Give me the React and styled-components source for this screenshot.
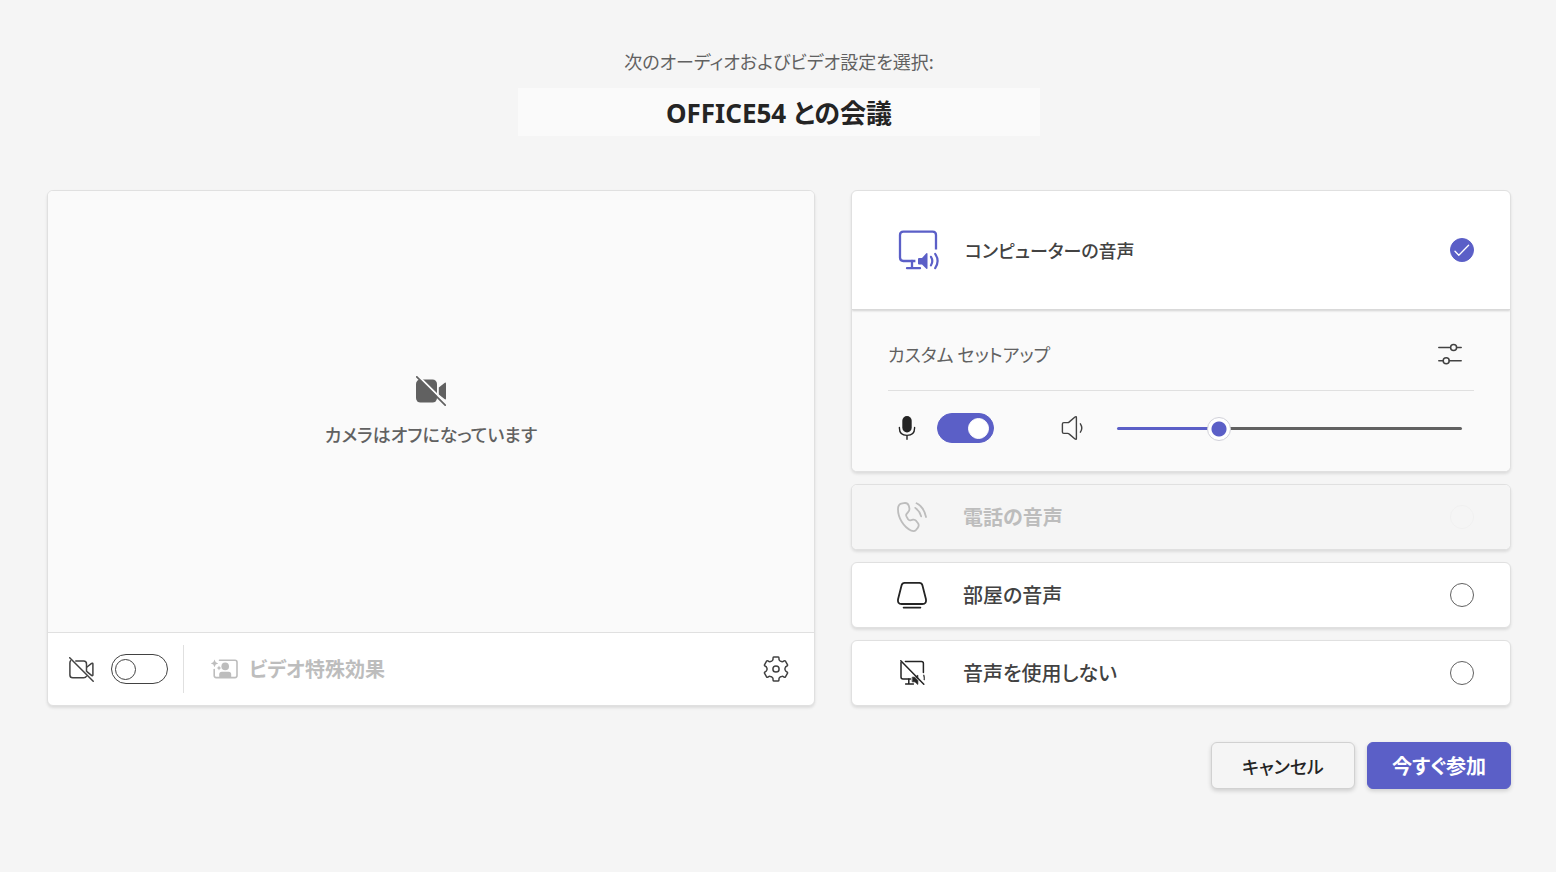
import { useState } from 'react';
import styled, { createGlobalStyle, css } from 'styled-components';

const GlobalStyle = createGlobalStyle`
  :root {
    --color-brand: #5b5fc7;
    --color-page: #f5f5f5;
    --color-panel: #fafafa;
    --color-border: #e0e0e0;
    --color-text: #242424;
    --color-text-2: #424242;
    --color-text-3: #616161;
    --color-disabled: #bdbdbd;
  }

  *,
  *::before,
  *::after {
    box-sizing: border-box;
  }

  body {
    margin: 0;
    background: var(--color-page);
    color: var(--color-text-2);
    font-family: 'Noto Sans CJK JP', sans-serif;
    font-size: 20px;
    line-height: 28px;
    font-feature-settings: 'palt';
  }

  button,
  input {
    margin: 0;
    font: inherit;
    font-feature-settings: inherit;
    color: inherit;
  }
`;

const Page = styled.main`
  min-height: 100vh;
  padding: 47px 45px 47px 47px;
`;

const Header = styled.header`
  display: flex;
  flex-direction: column;
  align-items: center;
  gap: 13px;
  margin-bottom: 54px;
`;

const Prompt = styled.label`
  color: var(--color-text-3);
  font-size: 18px;
`;

const TitleInput = styled.input`
  width: 100%;
  max-width: 522px;
  height: 48px;
  padding: 0 16px;
  border: 0;
  background: var(--color-panel);
  color: var(--color-text);
  font-family: 'Noto Sans', 'Noto Sans CJK JP', sans-serif;
  font-size: 26px;
  font-weight: 700;
  text-align: center;
`;

const Columns = styled.div`
  display: grid;
  grid-template-columns: 64fr 55fr;
  gap: 36px;
`;

const Card = styled.section`
  border: 1px solid var(--color-border);
  border-radius: 6px;
  background: #fff;
  box-shadow: 0 2px 3px rgba(0, 0, 0, 0.1);
  overflow: hidden;
`;

const VideoCard = styled(Card)`
  display: flex;
  flex-direction: column;
`;

const Preview = styled.div`
  flex: 1;
  display: flex;
  flex-direction: column;
  align-items: center;
  justify-content: center;
  gap: 14px;
  background: var(--color-panel);
  color: var(--color-text-3);
  font-size: 18px;
  font-weight: 500;
`;

const VideoBar = styled.div`
  display: flex;
  align-items: center;
  height: 73px;
  padding: 0 25px 0 21px;
  border-top: 1px solid var(--color-border);
`;

const ToggleLabel = styled.label`
  display: flex;
  align-items: center;
  gap: 18px;
`;

const CameraLabel = styled(ToggleLabel)`
  gap: 17px;
`;

const Divider = styled.div`
  width: 1px;
  height: 48px;
  margin: 0 27px 0 15px;
  background: var(--color-border);
`;

const PlainButton = styled.button`
  display: flex;
  align-items: center;
  gap: 11px;
  padding: 0;
  border: 0;
  background: none;
  font-weight: 700;

  &:disabled {
    color: var(--color-disabled);
  }
`;

const SettingsButton = styled(PlainButton)`
  margin-left: auto;
`;

const Switch = styled.input`
  appearance: none;
  display: flex;
  align-items: center;
  width: 57px;
  height: 30px;
  padding: 0 4px 0 3px;
  border: 1px solid var(--color-text-2);
  border-radius: 15px;

  &::before {
    content: '';
    width: 21px;
    height: 21px;
    border: 1px solid var(--color-text-2);
    border-radius: 50%;
  }

  &:checked {
    justify-content: flex-end;
    border-color: var(--color-brand);
    background: var(--color-brand);
  }

  &:checked::before {
    border-color: #fff;
    background: #fff;
  }
`;

const AudioOptions = styled.div`
  display: flex;
  flex-direction: column;
  gap: 12px;
`;

const Option = styled.label`
  display: flex;
  align-items: center;
  gap: 36px;
  height: 64px;
  padding: 0 36px 0 45px;
  font-weight: 500;

  ${(props) =>
    props.$large &&
    css`
      position: relative;
      gap: 25px;
      height: 119px;
      padding-left: 46px;
      border-bottom: 1px solid #d9d9d9;
      box-shadow: 0 1px 2px rgba(0, 0, 0, 0.16);
      font-size: 18px;
    `}

  ${(props) =>
    props.$disabled &&
    css`
      background: var(--color-page);
      color: var(--color-disabled);
      font-weight: 700;
    `}
`;

const RadioBox = styled.span`
  display: grid;
  place-items: center;
  margin-left: auto;

  & > * {
    grid-area: 1 / 1;
  }
`;

const Radio = styled.input`
  appearance: none;
  width: 24px;
  height: 24px;
  border: 1px solid var(--color-text-3);
  border-radius: 50%;

  &:disabled {
    border-color: #f0f0f0;
  }

  &:checked {
    border-color: var(--color-brand);
    background: var(--color-brand);
  }
`;

const Setup = styled.div`
  padding: 0 36px;
  background: var(--color-panel);
`;

const SetupHead = styled.div`
  display: flex;
  align-items: center;
  justify-content: space-between;
  height: 81px;
  padding: 8px 12px 0 0;
  border-bottom: 1px solid var(--color-border);
  color: var(--color-text-3);
  font-size: 18px;
`;

const SetupControls = styled.div`
  display: flex;
  align-items: center;
  gap: 67px;
  height: 80px;
  padding: 0 12px 6px 7px;
`;

const VolumeLabel = styled.label`
  flex: 1;
  display: flex;
  align-items: center;
  gap: 32px;
`;

const Slider = styled.input`
  appearance: none;
  flex: 1;
  min-width: 0;
  height: 24px;
  background: none;

  &::-webkit-slider-runnable-track {
    height: 3px;
    border-radius: 2px;
    background: linear-gradient(
      to right,
      var(--color-brand) ${(props) => props.value}%,
      var(--color-text-3) ${(props) => props.value}%
    );
  }

  &::-webkit-slider-thumb {
    appearance: none;
    width: 24px;
    height: 24px;
    margin-top: -10px;
    border: 1px solid #d1d1d9;
    border-radius: 50%;
    background: radial-gradient(var(--color-brand) 7px, #fff 8px);
  }
`;

const Actions = styled.footer`
  display: flex;
  justify-content: flex-end;
  gap: 12px;
  margin-top: 36px;
`;

const Button = styled.button`
  min-width: 144px;
  height: 47px;
  padding: 0 16px;
  border: 1px solid #d1d1d1;
  border-radius: 6px;
  background: var(--color-page);
  box-shadow: 0 2px 4px rgba(0, 0, 0, 0.16);
  color: var(--color-text);
  font-size: 18px;
  font-weight: 500;

  ${(props) =>
    props.$primary &&
    css`
      border-color: var(--color-brand);
      background: var(--color-brand);
      color: #fff;
      font-size: 20px;
      font-weight: 700;
    `}
`;

const Icon = styled.svg`
  display: block;
  flex: none;
  fill: none;
  stroke: currentColor;
  stroke-linecap: round;
  stroke-linejoin: round;
`;

function CameraOffFilled() {
  return (
    <Icon width='30' height='30' viewBox='0 0 30 30' strokeWidth='1.7'>
      <rect x='0' y='3.5' width='21' height='23' rx='4.5' fill='currentColor' stroke='none' />
      <path d='M22.8 11.6 28.5 6.9Q30 6 30 7.6V22.4Q30 24 28.5 23.1L22.8 18.4Z' fill='currentColor' stroke='none' />
      <path d='M3 .8 30.5 28' stroke='#fafafa' strokeWidth='2' />
      <path d='M.8.8 29.2 29.2' />
    </Icon>
  );
}

function CameraOff() {
  return (
    <Icon width='25' height='25' viewBox='0 0 25 25' strokeWidth='1.5'>
      <path d='M1.6 3.8Q.9 4.6.9 6V18Q.9 20.8 3.8 20.8H14.6Q16.8 20.8 17.4 19.3' />
      <path d='M6.8 4.1H14.6Q17.5 4.1 17.5 7V14.2' />
      <path d='M18 10 22.6 6.4Q23.9 5.7 23.9 7V18Q23.9 19 22.8 18.6L18.2 14.8' />
      <path d='M.7.7 24.2 24.2' />
    </Icon>
  );
}

function VideoEffects() {
  return (
    <Icon width='27' height='24' viewBox='0 0 27 24' strokeWidth='1.6'>
      <path d='M8.5 3.2H24Q26 3.2 26 5.2V18.6Q26 20.6 24 20.6H5.2Q3.2 20.6 3.2 18.6V12.5' />
      <g fill='currentColor' stroke='none'>
        <circle cx='14.2' cy='9.4' r='3.8' />
        <path d='M8.2 20.6V17.4Q8.2 14.8 10.8 14.8H17.6Q20.2 14.8 20.2 17.4V20.6Z' />
        <path d='M3.5 2.6 4.7 5.3 7.3 6.4 4.7 7.6 3.5 10.2 2.3 7.6-.1 6.4 2.3 5.3Z' />
        <path d='M8 8.6 8.8 10.2 10.4 11 8.8 11.8 8 13.4 7.2 11.8 5.6 11 7.2 10.2Z' />
      </g>
    </Icon>
  );
}

// six teeth, the first one pointing up
function gearPath() {
  const point = (angle, radius) => {
    const a = (angle * Math.PI) / 180;
    return `${(13 + Math.sin(a) * radius).toFixed(2)} ${(13 - Math.cos(a) * radius).toFixed(2)}`;
  };

  const teeth = [0, 60, 120, 180, 240, 300].map(
    (a) =>
      `${point(a - 22, 9.4)} Q${point(a - 17, 9.6)} ${point(a - 15, 11.4)} Q${point(a - 14, 12.3)} ${point(a - 10, 12.3)} L${point(a + 10, 12.3)} Q${point(a + 14, 12.3)} ${point(a + 15, 11.4)} Q${point(a + 17, 9.6)} ${point(a + 22, 9.4)} Q${point(a + 30, 8.4)} `
  );

  return `M${teeth.join('')}${point(-22, 9.4)}Z`;
}

function Gear() {
  return (
    <Icon width='26' height='26' viewBox='0 0 26 26' strokeWidth='1.5'>
      <path d={gearPath()} />
      <circle cx='13' cy='13' r='3.1' />
    </Icon>
  );
}

function ComputerAudio() {
  return (
    <Icon width='42' height='42' viewBox='0 -1 42 42' strokeWidth='2.3' color='#5b5fc7'>
      <path d='M17.4 31H5.4Q2 31 2 27.6V5Q2 1.6 5.4 1.6H34.6Q38 1.6 38 5V19.6' strokeLinecap='butt' />
      <path d='M14 31V38M9 38.2H22' />
      <path d='M21 28H24L28.3 23.3Q29.5 22.5 29.5 24.1V37.9Q29.5 39.5 28.3 38.7L24 34.5H21Q20 34.5 20 33.5V29Q20 28 21 28Z' fill='currentColor' stroke='none' />
      <path d='M33 26.8Q35.6 31 33 35.3M37.2 24Q42 31 37.2 38.1' strokeWidth='2.2' />
    </Icon>
  );
}

function PhoneAudio() {
  return (
    <Icon width='30' height='30' viewBox='0 0 92 92' strokeWidth='5.5'>
      <path d='M13 5 25 3Q33 3 36 11L38 19Q39 26 34 31L29 37Q27 40 29 44L34 53Q37 57 41 56L49 54Q55 53 59 58L65 66Q69 73 63 80L58 86Q53 91 44 88C20 77 3 48 3 22Q3 8 13 5Z' />
      <path d='M56 18Q69 27 74 44M60 4Q82 14 89 46' />
    </Icon>
  );
}

function RoomAudio() {
  return (
    <Icon width='30' height='30' viewBox='0 0 30 30' strokeWidth='1.8' color='#242424'>
      <path d='M7.6 2.8H22.4Q24.8 2.8 25.4 5.2L28.9 19Q29.8 24 25.4 24H4.6Q.2 24 1.1 19L4.6 5.2Q5.2 2.8 7.6 2.8ZM6.6 27.6H23.4' />
    </Icon>
  );
}

function NoAudio() {
  return (
    <Icon width='30' height='26' viewBox='-3 0 30 26' strokeWidth='1.5' color='#242424'>
      <path d='M1 2.6V17Q1 19 3 19H10.5M5.4 1.4H21.4Q23.4 1.4 23.4 3.4V12.4' />
      <path d='M8.8 19V23.8M5.6 24.1H13.4' />
      <path d='M12.6 17.2H14.6L17.8 20.4V24.4L15 21.8H12.6ZM16 16.6 17.8 15.2V18.2Z' fill='currentColor' strokeWidth='.8' />
      <path d='M23.8 15.2Q24.5 17.4 24.2 19.6' strokeWidth='1.2' />
      <path d='M.8.8 23.8 24.2' />
    </Icon>
  );
}

function Sliders() {
  return (
    <Icon width='24' height='24' viewBox='0 0 24 24' strokeWidth='1.5' color='#424242'>
      <path d='M.8 5.4H12.4M18.6 5.4H23.2M.8 18.8H5M11.2 18.8H23.2' />
      <circle cx='15.6' cy='5.4' r='3' />
      <circle cx='8.2' cy='18.8' r='3' />
    </Icon>
  );
}

function Mic() {
  return (
    <Icon width='24' height='24' viewBox='0 0 24 24' strokeWidth='1.4' color='#242424'>
      <rect x='7.3' y='0' width='9.4' height='16.4' rx='4.7' fill='currentColor' stroke='none' />
      <path d='M4.4 11.4V12Q4.4 19.4 12 19.4T19.6 12V11.4M12 19.4V23.3' />
    </Icon>
  );
}

function Speaker() {
  return (
    <Icon width='24' height='24' viewBox='0 0 24 24' strokeWidth='1.4' color='#424242'>
      <path d='M2.8 6.6H6.6Q7.6 6.6 8.3 5.9L14 1Q15.4 .2 15.4 1.6V22.4Q15.4 23.8 14 23L8.3 18.1Q7.6 17.4 6.6 17.4H2.8Q1.4 17.4 1.4 16V8Q1.4 6.6 2.8 6.6ZM19.4 7.8Q22.2 12 19.4 16.2' />
    </Icon>
  );
}

function Check() {
  return (
    <Icon width='24' height='24' viewBox='0 0 24 24' strokeWidth='1.3' color='#fff'>
      <path d='M5 13.2 8.8 17.2 18.6 7.2' />
    </Icon>
  );
}

function AudioOption({ value, selected, onSelect, icon, children, large, disabled }) {
  const isSelected = selected === value;

  return (
    <Option $large={large} $disabled={disabled}>
      {icon}
      <span>{children}</span>
      <RadioBox>
        <Radio
          type='radio'
          name='audio'
          value={value}
          checked={isSelected}
          disabled={disabled}
          onChange={() => onSelect(value)}
        />
        {isSelected && <Check />}
      </RadioBox>
    </Option>
  );
}

function App() {
  const [title, setTitle] = useState('OFFICE54 との会議');
  const [cameraOn, setCameraOn] = useState(false);
  const [micOn, setMicOn] = useState(true);
  const [volume, setVolume] = useState(28);
  const [audio, setAudio] = useState('computer');

  return (
    <Page lang='ja'>
      <GlobalStyle />

      <Header>
        <Prompt htmlFor='title'>次のオーディオおよびビデオ設定を選択:</Prompt>
        <TitleInput id='title' type='text' value={title} onChange={(e) => setTitle(e.target.value)} />
      </Header>

      <Columns>
        <VideoCard>
          <Preview>
            <CameraOffFilled />
            <span>カメラはオフになっています</span>
          </Preview>
          <VideoBar>
            <CameraLabel>
              <CameraOff />
              <Switch
                type='checkbox'
                role='switch'
                aria-label='カメラ'
                checked={cameraOn}
                onChange={(e) => setCameraOn(e.target.checked)}
              />
            </CameraLabel>
            <Divider />
            <PlainButton type='button' disabled>
              <VideoEffects />
              ビデオ特殊効果
            </PlainButton>
            <SettingsButton type='button' aria-label='設定'>
              <Gear />
            </SettingsButton>
          </VideoBar>
        </VideoCard>

        <AudioOptions>
          <Card>
            <AudioOption value='computer' selected={audio} onSelect={setAudio} icon={<ComputerAudio />} large>
              コンピューターの音声
            </AudioOption>
            <Setup>
              <SetupHead>
                <span>カスタム セットアップ</span>
                <PlainButton type='button' aria-label='カスタム セットアップ'>
                  <Sliders />
                </PlainButton>
              </SetupHead>
              <SetupControls>
                <ToggleLabel>
                  <Mic />
                  <Switch
                    type='checkbox'
                    role='switch'
                    aria-label='マイク'
                    checked={micOn}
                    onChange={(e) => setMicOn(e.target.checked)}
                  />
                </ToggleLabel>
                <VolumeLabel>
                  <Speaker />
                  <Slider
                    type='range'
                    aria-label='音量'
                    value={volume}
                    onChange={(e) => setVolume(Number(e.target.value))}
                  />
                </VolumeLabel>
              </SetupControls>
            </Setup>
          </Card>

          <Card>
            <AudioOption value='phone' selected={audio} onSelect={setAudio} icon={<PhoneAudio />} disabled>
              電話の音声
            </AudioOption>
          </Card>
          <Card>
            <AudioOption value='room' selected={audio} onSelect={setAudio} icon={<RoomAudio />}>
              部屋の音声
            </AudioOption>
          </Card>
          <Card>
            <AudioOption value='none' selected={audio} onSelect={setAudio} icon={<NoAudio />}>
              音声を使用しない
            </AudioOption>
          </Card>
        </AudioOptions>
      </Columns>

      <Actions>
        <Button type='button'>キャンセル</Button>
        <Button type='button' $primary>
          今すぐ参加
        </Button>
      </Actions>
    </Page>
  );
}

export default App;
